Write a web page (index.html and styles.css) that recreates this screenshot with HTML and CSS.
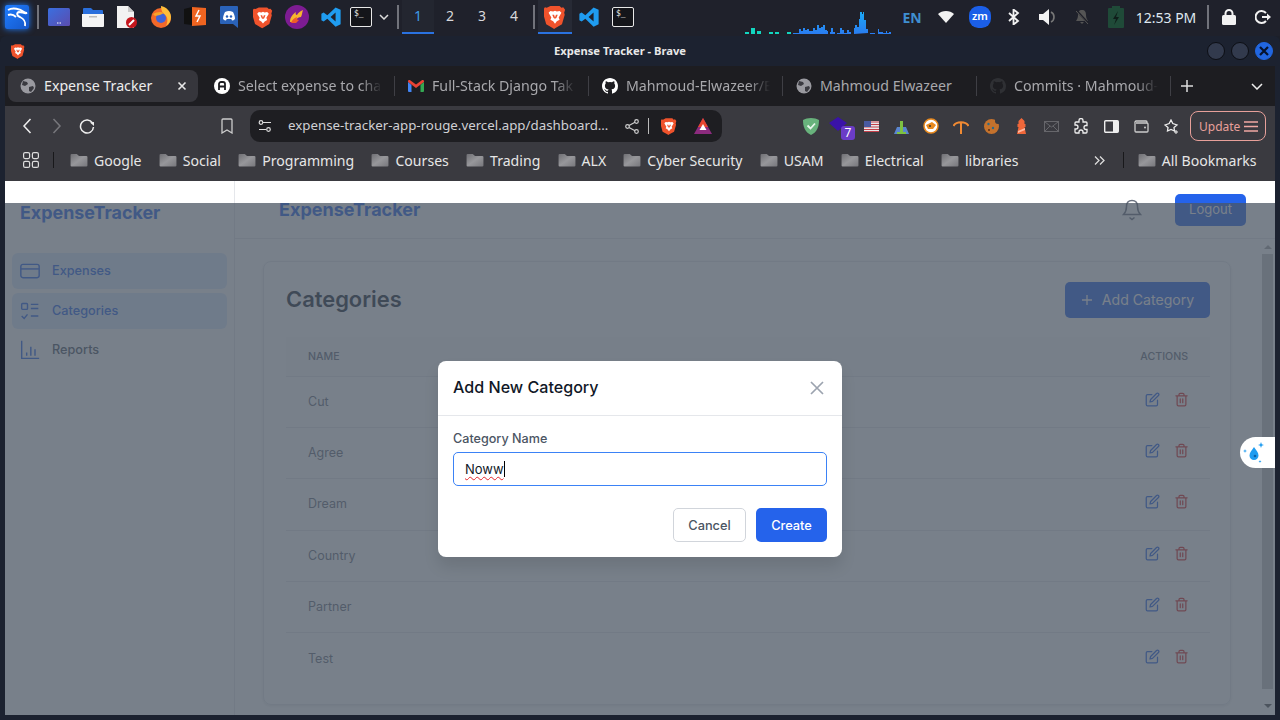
FILE: index.html
```html
<!DOCTYPE html>
<html lang="en">
<head>
  <meta charset="UTF-8">
  <meta name="viewport" content="width=device-width, initial-scale=1.0">
  <title>Expense Tracker - Brave</title>
  <link rel="stylesheet" href="styles.css">
</head>
<body>
  <svg class="icon-defs" width="0" height="0">
    <defs>
      <symbol id="brave" viewBox="0 0 24 24">
        <path fill="#f0532c" d="M7 1h10l2 2 2-.5 2 2.500-1 3.500.6 2-3 10.500-7 4-1.600 1-1.600-1-7-4-3-10.500.6-2-1-3.500 2-2.500 2 .5z" transform="translate(0 -.5)"/>
        <path fill="#fff" d="M7 6l3 .5 2-.8 2 .8 3-.5 2 2-3 5 1 2.500-3 1.800-2 2.500-2-2.500-3-1.800 1-2.500-3-5z"/>
        <path fill="#f0532c" d="M9 10h2l1 3 1-3h2l-1.500 3.500-1.500 1-1.500-1z"/>
      </symbol>
      <symbol id="vscode" viewBox="0 0 24 24">
        <path fill="#1f9cf0" fill-rule="evenodd" d="M17 1.500l5.500 2.600v15.800L17 22.500 8 13.800l-4 3-2.500-1.200V8.400L4 7.200l4 3zM17 7l-5.500 5 5.500 5z"/>
      </symbol>
      <symbol id="globe" viewBox="0 0 16 16">
        <circle cx="8" cy="8" r="7.500" fill="#9a9aa0"/>
        <path fill="#3a3a40" d="M3 3l4 1 1 2-3 2-3-1zM9 9l4-1 1 2-3 4-2-1z"/>
      </symbol>
      <symbol id="github" viewBox="0 0 16 16">
        <path fill="currentColor" d="M8 0C3.580 0 0 3.580 0 8c0 3.540 2.290 6.530 5.470 7.590.4.070.55-.17.55-.38v-1.340c-2.230.48-2.690-1.070-2.690-1.070-.36-.93-.89-1.170-.89-1.170-.73-.5.050-.49.050-.49.800.060 1.220.820 1.220.820.710 1.220 1.870.870 2.330.660.070-.520.280-.870.510-1.070-1.780-.2-3.640-.89-3.640-3.950 0-.870.310-1.590.820-2.150-.080-.2-.360-1.020.080-2.120 0 0 .670-.210 2.200.820a7.600 7.600 0 0 1 4 0c1.530-1.040 2.200-.820 2.200-.820.440 1.100.160 1.920.080 2.120.510.560.820 1.270.820 2.150 0 3.070-1.870 3.750-3.650 3.950.290.250.540.730.540 1.480v2.200c0 .210.150.460.550.380A8 8 0 0 0 16 8c0-4.420-3.580-8-8-8z"/>
      </symbol>
      <symbol id="folder" viewBox="0 0 16 14" preserveAspectRatio="none">
        <path fill="url(#folder-fill)" d="M1 1h5l2 2h6.500a1 1 0 0 1 1 1v8.500a1 1 0 0 1-1 1h-13a1 1 0 0 1-1-1V2a1 1 0 0 1 1-1z"/>
      </symbol>
      <linearGradient id="folder-fill" x1="0" y1="0" x2="1" y2="1">
        <stop offset="0" stop-color="#6f6f74"/>
        <stop offset=".5" stop-color="#97979b"/>
        <stop offset="1" stop-color="#77777c"/>
      </linearGradient>
      <symbol id="edit" viewBox="0 0 24 24">
        <path fill="none" stroke="currentColor" stroke-width="2" stroke-linecap="round" stroke-linejoin="round" d="M11 4H4a2 2 0 0 0-2 2v14a2 2 0 0 0 2 2h14a2 2 0 0 0 2-2v-7M18.500 2.500a2.121 2.121 0 0 1 3 3L12 15l-4 1 1-4 9.500-9.500z"/>
      </symbol>
      <symbol id="trash" viewBox="0 0 24 24">
        <path fill="none" stroke="currentColor" stroke-width="2" stroke-linecap="round" stroke-linejoin="round" d="M3 6h18M19 6v14a2 2 0 0 1-2 2H7a2 2 0 0 1-2-2V6m3 0V4a2 2 0 0 1 2-2h4a2 2 0 0 1 2 2v2M10 11v6M14 11v6"/>
      </symbol>
    </defs>
  </svg>

  <!-- desktop panel -->
  <div class="panel">
    <div class="panel-app">
      <div class="kali">
        <svg width="24" height="24" viewBox="0 0 24 24"><path fill="none" stroke="#fff" stroke-width="1.900" d="M3 5c5-3 12-1 16 2 1 1 2 1 3 1-2 1-5-1-8-1-3 1-2 4 1 5 4 2 6 4 5 9M3 10c3-1 6 0 8 2"/></svg>
      </div>
    </div>
    <div class="panel-sep"></div>
    <div class="panel-app">
      <svg width="22" height="18" viewBox="0 0 22 18"><defs><linearGradient id="desk" x1="0" y1="0" x2="1" y2="1"><stop offset="0" stop-color="#3a6fe0"/><stop offset="1" stop-color="#5b4cae"/></linearGradient></defs><rect width="22" height="18" rx="1.500" fill="url(#desk)"/><path stroke="#fff" stroke-dasharray="1.500 1" d="M9 15h5"/></svg>
    </div>
    <div class="panel-app">
      <svg width="22" height="20" viewBox="0 0 22 20"><path fill="#2a6fdc" d="M1 2a1 1 0 0 1 1-1h7l2 2h9a1 1 0 0 1 1 1v4H1z"/><path fill="#f4f4f4" d="M0 7h22v12a1 1 0 0 1-1 1H1a1 1 0 0 1-1-1z"/><rect x="7" y="9" width="8" height="1.500" fill="#bbb"/></svg>
    </div>
    <div class="panel-app">
      <svg width="22" height="22" viewBox="0 0 22 22"><path fill="#f2f2f2" d="M1 0h11l6 6v16H1z"/><path fill="#c9c9c9" d="M12 0l6 6h-6z"/><circle cx="15.500" cy="16.500" r="5.500" fill="#c5161d"/><path stroke="#fff" stroke-width="2" d="M13 19l5-5"/></svg>
    </div>
    <div class="panel-app">
      <svg width="22" height="22" viewBox="0 0 22 22"><circle cx="11" cy="12" r="10" fill="#f2682a"/><path fill="#ffbd39" d="M11 0c5 1 10 5 10 11 0 4-2 7-5 9 2-4 2-9-1-11-2-2-4-4-4-9z"/><circle cx="11" cy="12" r="5" fill="#3f63d8"/><path fill="#f7a32a" d="M3 8c3-2 8-3 11-1l-4 2-5 1z"/></svg>
    </div>
    <div class="panel-app">
      <svg width="22" height="22" viewBox="0 0 22 22"><path fill="#111" d="M0 3l8-2v18l-8-1z"/><path fill="#ef6420" d="M8 1l14 1v17l-14 1z"/><path fill="none" stroke="#fff" stroke-width="1.500" d="M15 4l-3 6h4l-3 6"/></svg>
    </div>
    <div class="panel-app">
      <svg width="18" height="22" viewBox="0 0 18 22"><path fill="#2a62b8" d="M1 0h16a1 1 0 0 1 1 1v21l-5-4H1a1 1 0 0 1-1-1V1a1 1 0 0 1 1-1z"/><path fill="#fff" d="M5 6c3-1.500 5-1.500 8 0 1 2 2 4 2 7-1 1-2 1.500-3 1.500l-.7-1.500h-4.600L6 14.500C5 14.500 4 14 3 13c0-3 1-5 2-7z"/><circle cx="7" cy="10.500" r="1.200" fill="#2a62b8"/><circle cx="11" cy="10.500" r="1.200" fill="#2a62b8"/></svg>
    </div>
    <div class="panel-app"><svg width="20" height="24"><use href="#brave"/></svg></div>
    <div class="panel-app">
      <svg width="24" height="24" viewBox="0 0 24 24"><circle cx="12" cy="12" r="12" fill="#7d1c92"/><path fill="#f6b52e" d="M5 17c0-5 3-8 6-10-1 2 0 3 1 3 1-2 3-4 6-5-1 3-1 5-2 7-2 0-4 1-5 3l-2 2z"/><path fill="#ef5b2b" d="M6 18c1-3 3-5 6-6-1 2 0 3 2 3l-3 3z"/></svg>
    </div>
    <div class="panel-app"><svg width="22" height="22"><use href="#vscode"/></svg></div>
    <div class="panel-app term-cell"><div class="term-box">$_</div></div>
    <div class="panel-app drop-cell">
      <svg width="10" height="6" viewBox="0 0 10 6"><path fill="none" stroke="#ddd" stroke-width="1.500" d="M1 1l4 4 4-4"/></svg>
    </div>
    <div class="panel-sep"></div>
    <div class="workspace is-current">1</div>
    <div class="workspace">2</div>
    <div class="workspace">3</div>
    <div class="workspace">4</div>
    <div class="panel-sep"></div>
    <div class="panel-app is-running"><svg width="22" height="25"><use href="#brave"/></svg></div>
    <div class="panel-app"><svg width="22" height="22"><use href="#vscode"/></svg></div>
    <div class="panel-app term-cell-wide"><div class="term-box">$_</div></div>

    <svg class="net-graph" width="148" height="30" viewBox="0 0 148 30">
      <defs><linearGradient id="net" x1="0" y1="0" x2="0" y2="1"><stop offset="0" stop-color="#1aa8f5"/><stop offset="1" stop-color="#2a7cf0"/></linearGradient></defs>
      <path fill="#12d6c0" d="M0 28h4v2H0zM6 24h4v6H6zM12 27h4v3h-4zM24 28h4v2h-4zM30 28h4v2h-4zM42 28h4v2h-4z"/>
      <path fill="url(#net)" d="M48 30v-1h6v-4h2v2h2v-3h2v2h2v-1h2v2h4v-3h2v2h2v-5h2v3h2v-1h2v-2h2v5h2v1h-5v0h6v3zM85 30v-2h1v-4h2v4h2v2zM92 30v-1h3v-5h2v2h2v3h3v-3h2v2h2v2zM109 30v-6h1v-3h2v2h2v-8h1v-7h2v2h1v-2h1v8h2v9h2v4zM125 30v-1h5v1zM133 30v-5h1v3h4v1h3v-2h1v2h2v-1h2v2z"/>
    </svg>

    <div class="tray-cell tray-lang">EN</div>
    <div class="tray-cell">
      <svg width="16" height="12" viewBox="0 0 16 12"><path fill="#f2f2f2" d="M0 3c4-4 12-4 16 0l-8 9z"/></svg>
    </div>
    <div class="tray-cell"><div class="zoom-badge">zm</div></div>
    <div class="tray-cell">
      <svg width="12" height="16" viewBox="0 0 12 16"><path fill="none" stroke="#f2f2f2" stroke-width="1.800" d="M1 4l9 8-4.500 3.500V.5L10 4l-9 8"/></svg>
    </div>
    <div class="tray-cell">
      <svg width="18" height="16" viewBox="0 0 18 16"><path fill="#f2f2f2" d="M0 5h4l6-5v16l-6-5H0z"/><path fill="none" stroke="#777" stroke-width="1.600" d="M12 3c4 2 4 8 0 10"/></svg>
    </div>
    <div class="tray-cell">
      <svg width="16" height="16" viewBox="0 0 16 16"><path fill="#555" d="M8 1c3 0 4 2 4 5 0 3 1 4 2 6H2c1-2 2-3 2-6 0-3 1-5 4-5zM6 13h4l-2 2z"/><path stroke="#1f2029" stroke-width="2" d="M2 1l12 13"/><path stroke="#555" d="M2 2l12 13"/></svg>
    </div>
    <div class="tray-cell">
      <svg width="16" height="22" viewBox="0 0 16 22"><rect x="4" width="8" height="2" fill="#1f4a38"/><rect y="2" width="16" height="20" rx="1" fill="#1f4a38"/><path fill="#0f1d1a" d="M10 5l-5 8h3l-2 6 5-8H8z"/></svg>
    </div>
    <div class="tray-time">12:53 PM</div>
    <div class="panel-sep tray-sep"></div>
    <div class="panel-app">
      <svg width="14" height="16" viewBox="0 0 14 16"><path fill="none" stroke="#f2f2f2" stroke-width="2" d="M3.500 7V4.500a3.500 3.500 0 0 1 7 0V7"/><rect y="6" width="14" height="10" rx="1.500" fill="#f2f2f2"/></svg>
    </div>
    <div class="panel-app">
      <svg width="16" height="14" viewBox="0 0 16 14"><path fill="none" stroke="#f2f2f2" stroke-width="2" d="M11 3a6 6 0 1 0 0 8"/><path fill="#f2f2f2" d="M7 6h5V3.500L16 7l-4 3.500V8H7z"/></svg>
    </div>
  </div>

  <div class="window">
    <div class="titlebar">
      <svg class="title-logo" width="14" height="16"><use href="#brave"/></svg>
      <div class="title-text">Expense Tracker - Brave</div>
      <div class="title-buttons">
        <span class="win-btn"></span>
        <span class="win-btn"></span>
        <span class="win-btn win-close">
          <svg width="10" height="10" viewBox="0 0 10 10"><path stroke="#06122c" stroke-width="2.200" d="M1 1l8 8M9 1l-8 8"/></svg>
        </span>
      </div>
    </div>

    <div class="tabstrip">
      <div class="tab is-active">
        <svg class="fav" width="16" height="16"><use href="#globe"/></svg>
        <span class="tab-title">Expense Tracker</span>
        <svg class="tab-close" width="10" height="10" viewBox="0 0 10 10"><path stroke="#e8e8e8" stroke-width="1.600" d="M1.500 1.500l7 7M8.500 1.500l-7 7"/></svg>
      </div>
      <span class="tab-sep is-hidden"></span>
      <div class="tab">
        <svg class="fav" width="16" height="16" viewBox="0 0 16 16"><circle cx="8" cy="8" r="8" fill="#fff"/><path fill="none" stroke="#1d1d21" stroke-width="1.800" d="M5 12V6a2 2 0 0 1 2-2h2a2 2 0 0 1 2 2v6M5 8.500h6"/></svg>
        <span class="tab-title">Select expense to char</span>
      </div>
      <span class="tab-sep"></span>
      <div class="tab">
        <svg class="fav" width="16" height="12" viewBox="0 0 16 12"><path fill="#ea4335" d="M0 2l8 6 8-6v-.5C16 0 14.500-.3 13.500.4L8 4.500 2.500.4C1.500-.3 0 0 0 1.500z"/><path fill="#4285f4" d="M0 2v9a1 1 0 0 0 1 1h2.500V5z"/><path fill="#34a853" d="M16 2v9a1 1 0 0 1-1 1h-2.500V5z"/></svg>
        <span class="tab-title">Full-Stack Django Tak</span>
      </div>
      <span class="tab-sep"></span>
      <div class="tab">
        <svg class="fav fav-github" width="16" height="16"><use href="#github"/></svg>
        <span class="tab-title">Mahmoud-Elwazeer/E</span>
      </div>
      <span class="tab-sep"></span>
      <div class="tab">
        <svg class="fav" width="16" height="16"><use href="#globe"/></svg>
        <span class="tab-title tab-title-plain">Mahmoud Elwazeer</span>
      </div>
      <span class="tab-sep"></span>
      <div class="tab">
        <svg class="fav fav-github-dim" width="16" height="16"><use href="#github"/></svg>
        <span class="tab-title">Commits · Mahmoud-</span>
      </div>
      <span class="tab-sep"></span>
      <svg class="tab-plus" width="12" height="12" viewBox="0 0 12 12"><path stroke="#ddd" stroke-width="1.500" d="M6 0v12M0 6h12"/></svg>
      <svg class="tab-list" width="12" height="7" viewBox="0 0 12 7"><path fill="none" stroke="#eee" stroke-width="1.500" d="M1 1l5 5 5-5"/></svg>
    </div>

    <div class="toolbar">
      <div class="tool-btn">
        <svg width="10" height="16" viewBox="0 0 10 16"><path fill="none" stroke="#eee" stroke-width="1.500" d="M8.500 1L2 8l6.500 7"/></svg>
      </div>
      <div class="tool-btn">
        <svg width="10" height="16" viewBox="0 0 10 16"><path fill="none" stroke="#77777c" stroke-width="1.500" d="M1.500 1L8 8l-6.500 7"/></svg>
      </div>
      <div class="tool-btn">
        <svg width="16" height="16" viewBox="0 0 16 16"><path fill="none" stroke="#eee" stroke-width="1.500" d="M13.500 5A6.500 6.500 0 1 0 14.500 9"/><path fill="#eee" d="M11 4.500l4-.5v4z"/></svg>
      </div>
      <div class="tool-btn tool-bookmark">
        <svg width="12" height="16" viewBox="0 0 12 16"><path fill="none" stroke="#ccc" stroke-width="1.300" d="M1 2a1 1 0 0 1 1-1h8a1 1 0 0 1 1 1v13l-5-3-5 3z"/></svg>
      </div>
      <div class="urlbar">
        <svg class="url-tune" width="14" height="14" viewBox="0 0 14 14"><g fill="none" stroke="#ddd" stroke-width="1.200"><circle cx="3" cy="3.500" r="1.800"/><path d="M5 3.500h8M1 10.500h7"/><circle cx="10.500" cy="10.500" r="1.800"/></g></svg>
        <span class="url-text">expense-tracker-app-rouge.vercel.app/dashboard…</span>
        <svg class="url-share" width="14" height="15" viewBox="0 0 14 15"><g fill="none" stroke="#ccc" stroke-width="1.200"><circle cx="2.500" cy="7.500" r="1.800"/><circle cx="11.500" cy="2.500" r="1.800"/><circle cx="11.500" cy="12.500" r="1.800"/><path d="M4 6.500l6-3.300M4 8.500l6 3.300"/></g></svg>
        <span class="url-sep"></span>
        <svg class="url-brave" width="16" height="18"><use href="#brave"/></svg>
        <svg class="url-rewards" width="18" height="16" viewBox="0 0 18 16"><path fill="#8c2b7e" d="M9 0l9 16H0z"/><path fill="#e6452f" d="M9 0l5 9H4z"/><path fill="#fff" d="M9 6l3.500 6h-7z"/></svg>
      </div>
      <div class="extensions">
        <div class="ext">
          <svg width="16" height="17" viewBox="0 0 16 17"><path fill="#68b27c" d="M8 0c3 0 6 .8 8 2 0 7-2 12-8 15C2 14 0 9 0 2c2-1.200 5-2 8-2z"/><path fill="none" stroke="#e8f5ec" stroke-width="1.800" d="M4.500 7.500l3 3 4.500-5"/></svg>
        </div>
        <div class="ext ext-badge-wrap">
          <svg class="ext-diamond" width="18" height="14" viewBox="0 0 18 14"><path fill="#3a13a8" d="M9 0l9 6-9 8-9-8z"/></svg>
          <span class="ext-badge">7</span>
        </div>
        <div class="ext">
          <svg width="15" height="11" viewBox="0 0 15 11"><rect width="15" height="11" fill="#e8e8ea"/><path stroke="#c5404a" stroke-width="1.200" d="M0 1h15M0 3.500h15M0 6h15M0 8.500h15M0 10.500h15"/><rect width="7" height="6" fill="#4a5aa0"/></svg>
        </div>
        <div class="ext">
          <svg width="15" height="15" viewBox="0 0 15 15"><path fill="#5a86d0" d="M0 15l3-7h3v7zM9 8h3l3 7H9z"/><path fill="#7dc142" d="M6 15V2h3v13zM3 13h9v2H3z"/></svg>
        </div>
        <div class="ext">
          <svg width="16" height="16" viewBox="0 0 16 16"><circle cx="8" cy="8" r="7" fill="#fff" stroke="#e98a1e" stroke-width="1.500"/><path fill="#e98a1e" d="M3 7l6-3 4 3-3 4H5z"/><circle cx="7" cy="8" r="1" fill="#333"/></svg>
        </div>
        <div class="ext">
          <svg width="16" height="16" viewBox="0 0 16 16"><path fill="none" stroke="#f08a33" stroke-width="2" d="M8 4v12M.5 8C3 3 13 3 15.500 8"/></svg>
        </div>
        <div class="ext">
          <svg width="15" height="15" viewBox="0 0 15 15"><circle cx="7.500" cy="7.500" r="7.500" fill="#c4722d"/><circle cx="4.500" cy="5" r="1.200" fill="#2b6a8a"/><circle cx="9" cy="9" r="1.200" fill="#2b6a8a"/><circle cx="5" cy="11" r="1" fill="#5a3015"/><circle cx="14" cy="2" r="3" fill="#3a3a40"/></svg>
        </div>
        <div class="ext">
          <svg width="15" height="16" viewBox="0 0 13 16"><path fill="#f0673a" d="M6.500 0l3 3v3h1v3h-1l1.500 7H2L3.500 9h-1V6h1V3z"/><path fill="#ffb8a0" d="M3 13l7-3v2l-7 3z"/></svg>
        </div>
        <div class="ext">
          <svg width="15" height="11" viewBox="0 0 15 11"><rect x=".5" y=".5" width="14" height="10" fill="none" stroke="#66666b"/><path fill="none" stroke="#66666b" d="M1 1l6.500 5L14 1M1 10l5-5M14 10L9 5"/></svg>
        </div>
        <div class="ext">
          <svg width="16" height="16" viewBox="0 0 16 16"><path fill="none" stroke="#eee" stroke-width="1.300" d="M6 2.500a2 2 0 0 1 4 0V4h3a1 1 0 0 1 1 1v2.500h-1a2 2 0 0 0 0 4h1V14a1 1 0 0 1-1 1h-3v-1a2 2 0 0 0-4 0v1H3a1 1 0 0 1-1-1v-3h1a2 2 0 0 0 0-4H2V5a1 1 0 0 1 1-1h3z"/></svg>
        </div>
        <div class="ext">
          <svg width="15" height="13" viewBox="0 0 15 13"><rect x=".7" y=".7" width="13.600" height="11.600" rx="1" fill="none" stroke="#eee" stroke-width="1.400"/><rect x="9" y="1" width="5" height="11" fill="#eee"/></svg>
        </div>
        <div class="ext">
          <svg width="15" height="13" viewBox="0 0 15 13"><path fill="none" stroke="#ccc" stroke-width="1.300" d="M13 3V2a1 1 0 0 0-1-1H2a1.500 1.500 0 0 0-1 2v8a1 1 0 0 0 1 1h11a1 1 0 0 0 1-1V4a1 1 0 0 0-1-1H2"/><circle cx="11" cy="7.500" r="1" fill="#ccc"/></svg>
        </div>
        <div class="ext">
          <svg width="15" height="15" viewBox="0 0 15 15"><path fill="none" stroke="#eee" stroke-width="1.300" d="M7 1l1.800 3.500L13 6l-3 2.500.5 3.500-3.500-1.500L3.500 12 4 8.500 1 6l4.200-1.500z"/><path stroke="#eee" d="M12 11v4M10 13h4"/></svg>
        </div>
      </div>
      <div class="update-btn">
        <span>Update</span>
        <svg width="14" height="11" viewBox="0 0 14 11"><path stroke="#f1a8a2" stroke-width="1.300" d="M0 1h14M0 5.500h14M0 10h14"/></svg>
      </div>
    </div>

    <div class="bookmarks">
      <svg class="apps-icon" width="16" height="16" viewBox="0 0 16 16"><g fill="none" stroke="#ddd" stroke-width="1.200"><rect x=".6" y=".6" width="6" height="6" rx="1.500"/><rect x="9.400" y=".6" width="6" height="6" rx="1.500"/><rect x=".6" y="9.400" width="6" height="6" rx="1.500"/><rect x="9.400" y="9.400" width="6" height="6" rx="1.500"/></g></svg>
      <span class="bm-sep"></span>
      <div class="bm"><svg width="18" height="14"><use href="#folder"/></svg>Google</div>
      <div class="bm"><svg width="18" height="14"><use href="#folder"/></svg>Social</div>
      <div class="bm"><svg width="18" height="14"><use href="#folder"/></svg>Programming</div>
      <div class="bm"><svg width="18" height="14"><use href="#folder"/></svg>Courses</div>
      <div class="bm"><svg width="18" height="14"><use href="#folder"/></svg>Trading</div>
      <div class="bm"><svg width="18" height="14"><use href="#folder"/></svg>ALX</div>
      <div class="bm"><svg width="18" height="14"><use href="#folder"/></svg>Cyber Security</div>
      <div class="bm"><svg width="18" height="14"><use href="#folder"/></svg>USAM</div>
      <div class="bm"><svg width="18" height="14"><use href="#folder"/></svg>Electrical</div>
      <div class="bm"><svg width="18" height="14"><use href="#folder"/></svg>libraries</div>
      <svg class="bm-more" width="11" height="9" viewBox="0 0 11 9"><path fill="none" stroke="#ddd" stroke-width="1.300" d="M1 .5l4 4-4 4M6 .5l4 4-4 4"/></svg>
      <span class="bm-sep bm-sep-right"></span>
      <div class="bm"><svg width="18" height="14"><use href="#folder"/></svg>All Bookmarks</div>
    </div>

    <!-- page -->
    <div class="page">
      <aside class="sidebar">
        <div class="side-logo">ExpenseTracker</div>
        <nav class="side-nav">
          <a class="side-link is-on">
            <svg width="20" height="20" viewBox="0 0 24 24"><rect x="1" y="4" width="22" height="16" rx="2.500" fill="none" stroke="currentColor" stroke-width="1.700"/><path stroke="currentColor" stroke-width="1.700" d="M1 9.500h22"/></svg>
            <span>Expenses</span>
          </a>
          <a class="side-link is-on">
            <svg width="20" height="20" viewBox="0 0 24 24"><g fill="none" stroke="currentColor" stroke-width="1.700"><rect x="2" y="3" width="7" height="7" rx="1"/><path d="M13 4h9M13 9h9M13 18h9M2 18l3 3 4-5"/></g></svg>
            <span>Categories</span>
          </a>
          <a class="side-link is-report">
            <svg width="20" height="20" viewBox="0 0 24 24"><path fill="none" stroke="#2563eb" stroke-width="1.700" d="M2 1v21h21M8 15v4M13 8v11M18 11v8"/></svg>
            <span>Reports</span>
          </a>
        </nav>
      </aside>

      <div class="main">
        <header class="topbar">
          <div class="top-logo">ExpenseTracker</div>
          <svg class="bell" width="20" height="22" viewBox="0 0 20 22"><path fill="none" stroke="#6b7280" stroke-width="1.500" d="M10 1.500c-3.500 0-5.500 2.500-5.500 6 0 4-1 6-3 8h17c-2-2-3-4-3-8 0-3.500-2-6-5.500-6zM7.500 18.500l2.500 2 2.500-2"/></svg>
          <button class="logout">Logout</button>
        </header>
        <div class="main-body">
          <section class="card">
            <div class="card-head">
              <h1>Categories</h1>
              <button class="add-btn">
                <svg width="12" height="12" viewBox="0 0 12 12"><path stroke="#fff" stroke-width="1.300" d="M6 1v10M1 6h10"/></svg>
                <span>Add Category</span>
              </button>
            </div>
            <table class="cat-table">
              <thead>
                <tr><th>Name</th><th class="col-actions">Actions</th></tr>
              </thead>
              <tbody>
                <tr><td>Cut</td><td class="col-actions"><svg class="act-edit" width="15" height="15"><use href="#edit"/></svg><svg class="act-del" width="15" height="15"><use href="#trash"/></svg></td></tr>
                <tr><td>Agree</td><td class="col-actions"><svg class="act-edit" width="15" height="15"><use href="#edit"/></svg><svg class="act-del" width="15" height="15"><use href="#trash"/></svg></td></tr>
                <tr><td>Dream</td><td class="col-actions"><svg class="act-edit" width="15" height="15"><use href="#edit"/></svg><svg class="act-del" width="15" height="15"><use href="#trash"/></svg></td></tr>
                <tr><td>Country</td><td class="col-actions"><svg class="act-edit" width="15" height="15"><use href="#edit"/></svg><svg class="act-del" width="15" height="15"><use href="#trash"/></svg></td></tr>
                <tr><td>Partner</td><td class="col-actions"><svg class="act-edit" width="15" height="15"><use href="#edit"/></svg><svg class="act-del" width="15" height="15"><use href="#trash"/></svg></td></tr>
                <tr class="last-row"><td>Test</td><td class="col-actions"><svg class="act-edit" width="15" height="15"><use href="#edit"/></svg><svg class="act-del" width="15" height="15"><use href="#trash"/></svg></td></tr>
              </tbody>
            </table>
          </section>
          <div class="scrollbar">
            <span class="arrow-up"></span>
            <span class="scroll-thumb"></span>
            <span class="arrow-down"></span>
          </div>
        </div>
      </div>

      <div class="overlay">
        <div class="modal">
          <div class="modal-head">
            <h2>Add New Category</h2>
            <svg width="14" height="14" viewBox="0 0 14 14"><path stroke="#9ca3af" stroke-width="1.700" d="M1 1l12 12M13 1L1 13"/></svg>
          </div>
          <div class="modal-body">
            <label class="field-label">Category Name</label>
            <div class="field-input"><span class="typed">Noww</span></div>
            <div class="modal-actions">
              <button class="btn-cancel">Cancel</button>
              <button class="btn-create">Create</button>
            </div>
          </div>
        </div>
      </div>

      <div class="float-tab">
        <svg width="24" height="22" viewBox="0 0 24 22"><path fill="#1e9cf0" d="M12 5c2 3 4.500 5.500 4.500 8.500a4.500 4.500 0 0 1-9 0C7.500 10.500 10 8 12 5z"/><circle cx="13" cy="14" r="1.300" fill="#0b5fa8"/><path fill="#1e9cf0" d="M19 0l.8 2.200L22 3l-2.200.8L19 6l-.8-2.200L16 3l2.200-.8zM3 7l.5 1.500L5 9l-1.500.5L3 11l-.5-1.500L1 9l1.500-.5zM18 18l.4 1.100 1.100.4-1.100.4-.4 1.100-.4-1.100-1.100-.4 1.100-.4z"/></svg>
      </div>
    </div>
  </div>
</body>
</html>
```

FILE: styles.css
```css
/* Desktop */
* {
  box-sizing: border-box;
}

html, body {
  margin: 0;
  padding: 0;
  height: 720px;
  overflow: hidden;
}

body {
  display: flex;
  flex-direction: column;
  background-color: #1c1f29;
  font-family: "Noto Sans", sans-serif;
}

.icon-defs {
  position: absolute;
}

svg {
  display: block;
  flex-shrink: 0;
}

.panel {
  display: flex;
  align-items: center;
  height: 36px;
  flex-shrink: 0;
  background-color: #1f212b;
  color: #e6e6e6;
}

.panel-app {
  display: flex;
  align-items: center;
  justify-content: center;
  width: 34px;
  height: 34px;
  margin-bottom: 2px;
}

.kali {
  display: flex;
  align-items: center;
  justify-content: center;
  width: 24px;
  height: 24px;
  background: linear-gradient(135deg, #1f7dff, #1557c9);
  border-radius: 2px;
  box-shadow: 0 0 6px #1f7dff;
}

.panel-sep {
  width: 2px;
  height: 24px;
  margin: 0 3px 2px;
  background-color: #71737b;
}

.term-cell {
  width: 26px;
}

.drop-cell {
  width: 20px;
}

.term-cell-wide {
  width: 34px;
}

.term-box {
  width: 22px;
  height: 20px;
  padding-left: 3px;
  background-color: #14151a;
  border: 1px solid #e8e8e8;
  border-radius: 2px;
  font-family: "DejaVu Sans Mono", monospace;
  font-size: 8px;
  line-height: 12px;
  color: #eee;
}

.workspace {
  width: 32px;
  height: 34px;
  margin-bottom: 2px;
  text-align: center;
  font-size: 14px;
  line-height: 32px;
  color: #d8d8dc;
}

.workspace.is-current {
  background-color: #232630;
  border-bottom: 2px solid #2a72e0;
  color: #3f9be8;
}

.is-running {
  background-color: #272a35;
  border-bottom: 2px solid #2a72e0;
}

.net-graph {
  align-self: flex-start;
  margin: 4px 0 0 105px;
}

.tray-cell {
  display: flex;
  align-items: center;
  justify-content: center;
  width: 34px;
  height: 34px;
  margin-bottom: 2px;
}

.net-graph + .tray-cell {
  margin-left: 2px;
}

.tray-lang {
  font-size: 14px;
  font-weight: 700;
  color: #3f8fd0;
}

.zoom-badge {
  width: 22px;
  height: 22px;
  background-color: #1b5fe8;
  border-radius: 42%;
  text-align: center;
  font-size: 11px;
  font-weight: 600;
  line-height: 20px;
  color: #fff;
}

.tray-time {
  width: 66px;
  margin-bottom: 2px;
  text-align: center;
  white-space: nowrap;
  font-size: 14px;
  color: #dfe8f0;
}

.tray-sep {
  margin-left: 8px;
}

/* Browser window */
.window {
  flex: 1;
  min-height: 0;
  display: flex;
  flex-direction: column;
  padding: 0 5px 5px;
  background-color: #1c2230;
  border-radius: 6px 6px 0 0;
}

.titlebar {
  position: relative;
  display: flex;
  align-items: center;
  justify-content: center;
  flex-shrink: 0;
  height: 30px;
  padding: 0 40px 2px 0;
}

.title-logo {
  position: absolute;
  left: 6px;
  top: 7px;
}

.title-text {
  font-size: 11.200px;
  font-weight: 700;
  color: #e8e8e8;
}

.title-buttons {
  position: absolute;
  right: 2px;
  top: 6px;
  display: flex;
  gap: 6px;
}

.win-btn {
  display: flex;
  align-items: center;
  justify-content: center;
  width: 18px;
  height: 18px;
  background-color: #323a4d;
  border: 1px solid #0c0e14;
  border-radius: 50%;
}

.win-close {
  background-color: #2166e0;
  border-color: #2166e0;
}

.tabstrip {
  display: flex;
  align-items: center;
  flex-shrink: 0;
  height: 40px;
  padding-left: 3px;
  background-color: #1d1d21;
}

.tab {
  display: flex;
  align-items: center;
  gap: 8px;
  width: 190px;
  height: 32px;
  padding: 0 0 2px 12px;
  font-size: 14.200px;
  color: #a8a8ac;
}

.tab > svg {
  margin-top: 2px;
}

.tab.is-active {
  background-color: #36363c;
  border-radius: 8px;
  color: #ececec;
}

.tab-title {
  flex: none;
  width: 144px;
  white-space: nowrap;
  -webkit-mask-image: linear-gradient(to right, #000 85%, transparent 100%);
  mask-image: linear-gradient(to right, #000 85%, transparent 100%);
}

.tab.is-active .tab-title {
  flex: 1;
  width: auto;
}

.tab.is-active .tab-title,
.tab-title-plain {
  -webkit-mask-image: none;
  mask-image: none;
}

.tab-close {
  margin-right: 11px;
}

.tab-sep {
  width: 1px;
  height: 20px;
  margin: 0 1.500px;
  background-color: #3f3f45;
}

.tab-sep.is-hidden {
  background-color: transparent;
}

.fav-github {
  color: #fff;
}

.fav-github-dim {
  color: #2f3034;
}

.tab-plus {
  margin-left: 9px;
}

.tab-list {
  margin-left: 58px;
}

.toolbar {
  display: flex;
  align-items: center;
  flex-shrink: 0;
  height: 40px;
  padding-left: 7px;
  background-color: #3a3a40;
}

.tool-btn {
  display: flex;
  align-items: center;
  justify-content: center;
  width: 30px;
  height: 30px;
}

.tool-bookmark {
  margin-left: 110px;
}

.urlbar {
  display: flex;
  align-items: center;
  width: 472px;
  height: 32px;
  margin-left: 8px;
  padding-left: 8px;
  background-color: #1e1e22;
  border-radius: 10px;
}

.url-text {
  width: 322px;
  margin: 0 0 2px 16px;
  white-space: nowrap;
  font-size: 13.300px;
  color: #d0d0d4;
}

.url-share {
  margin-left: 15px;
}

.url-sep {
  width: 1px;
  height: 16px;
  margin-left: 9px;
  background-color: #bbb;
}

.url-brave {
  margin-left: 12px;
}

.url-rewards {
  margin-left: 17px;
}

.extensions {
  display: flex;
  margin-left: 74px;
}

.ext {
  position: relative;
  display: flex;
  align-items: center;
  justify-content: center;
  width: 30px;
  height: 30px;
}

.ext-diamond {
  margin: 0 6px 4px 0;
}

.ext-badge {
  position: absolute;
  left: 15px;
  top: 15px;
  width: 14px;
  height: 14px;
  background-color: #6b3cc7;
  border-radius: 3px;
  text-align: center;
  font-size: 12px;
  line-height: 14px;
  color: #fff;
}

.update-btn {
  display: flex;
  align-items: center;
  gap: 4px;
  width: 76px;
  height: 30px;
  margin-left: 4px;
  padding-left: 8px;
  border: 1px solid #e8a09a;
  border-radius: 8px;
  font-size: 12px;
  color: #e8a09a;
}

.bookmarks {
  display: flex;
  align-items: center;
  flex-shrink: 0;
  height: 35px;
  padding: 0 0 7px 18px;
  background-color: #3a3a40;
  font-size: 14.100px;
  color: #e6e6e6;
}

.apps-icon {
  margin-right: 6px;
}

.bm-sep {
  width: 1px;
  height: 16px;
  margin: 0 16px 0 8px;
  background-color: #18181b;
}

.bm {
  display: flex;
  align-items: center;
  gap: 6px;
  margin-right: 17.200px;
  white-space: nowrap;
}

.bm-more {
  margin-left: 58px;
}

.bm-sep-right {
  margin-left: 18px;
  margin-right: 14px;
}

/* Expense tracker page */
.page {
  position: relative;
  flex: 1;
  min-height: 0;
  display: flex;
  overflow: hidden;
  background-color: #fff;
  font-family: Inter, sans-serif;
}

.sidebar {
  width: 230px;
  padding: 20px 7px 0;
  border-right: 1px solid #e5e7eb;
}

.side-logo {
  padding: 1px 0 0 8px;
  font-size: 17.900px;
  font-weight: 700;
  line-height: 22px;
  color: #2563eb;
}

.side-nav {
  display: flex;
  flex-direction: column;
  gap: 4px;
  margin-top: 29px;
}

.side-link {
  display: flex;
  align-items: center;
  gap: 12px;
  height: 36px;
  padding-left: 8px;
  border-radius: 6px;
  font-size: 12.700px;
  font-weight: 500;
  color: #4b5563;
}

.side-link span {
  margin-bottom: 1px;
}

.side-link.is-on {
  background-color: #dbeafe;
  color: #2563eb;
}

.side-link.is-report {
  margin-top: -1px;
}

.main {
  flex: 1;
  min-height: 0;
  display: flex;
  flex-direction: column;
}

.topbar {
  display: flex;
  align-items: center;
  flex-shrink: 0;
  height: 58px;
  padding: 0 29px 0 44px;
  border-bottom: 1px solid #e5e7eb;
}

.top-logo {
  flex: 1;
  font-size: 18px;
  font-weight: 700;
  color: #2563eb;
}

.bell {
  margin-right: 33px;
}

.logout {
  width: 71px;
  height: 32px;
  padding-bottom: 2px;
  background-color: #2563eb;
  border: none;
  border-radius: 5px;
  font-family: Inter, sans-serif;
  font-size: 13px;
  color: #fff;
}

.main-body {
  flex: 1;
  min-height: 0;
  display: flex;
  padding: 22px 0 10px 28px;
}

.card {
  width: 968px;
  padding: 20px 20px 0 22px;
  border: 1px solid #e5e7eb;
  border-radius: 8px;
  box-shadow: 0 1px 3px rgba(0, 0, 0, 0.1);
}

.card-head {
  display: flex;
  align-items: center;
  justify-content: space-between;
  height: 36px;
  margin-bottom: 19px;
}

h1 {
  margin: 0 0 2px;
  font-size: 21.900px;
  font-weight: 600;
  color: #1f2937;
}

.add-btn {
  display: flex;
  align-items: center;
  justify-content: center;
  gap: 9px;
  width: 145px;
  height: 36px;
  background-color: #2563eb;
  border: none;
  border-radius: 5px;
  font-family: Inter, sans-serif;
  font-size: 14.100px;
  color: #fff;
}

.add-btn span {
  margin-bottom: 1px;
}

.cat-table {
  width: 100%;
  border-collapse: collapse;
}

.cat-table th {
  height: 39px;
  padding: 0 22px;
  background-color: #f9fafb;
  border-bottom: 1px solid #e5e7eb;
  text-align: left;
  text-transform: uppercase;
  font-size: 10.600px;
  font-weight: 500;
  color: #6b7280;
}

.cat-table td {
  height: 51.400px;
  padding: 0 22px 1px;
  border-bottom: 1px solid #e5e7eb;
  font-size: 12.500px;
  color: #6b7280;
}

.cat-table .last-row td {
  border-bottom: none;
}

.cat-table .col-actions {
  width: 140px;
  text-align: right;
}

.cat-table td.col-actions {
  padding-right: 21px;
  padding-bottom: 2px;
}

.act-edit,
.act-del {
  display: inline-block;
}

.act-edit {
  color: #2563eb;
}

.act-del {
  margin-left: 14px;
  color: #dc2626;
}

.scrollbar {
  display: flex;
  flex-direction: column;
  align-items: center;
  width: 11px;
  height: 475px;
  margin: -21px 2px 0 31px;
}

.arrow-up,
.arrow-down {
  flex-shrink: 0;
  width: 0;
  height: 0;
  border-left: 4px solid transparent;
  border-right: 4px solid transparent;
}

.arrow-up {
  margin-top: 5px;
  border-bottom: 4px solid #a3a3a3;
}

.arrow-down {
  margin-top: 15px;
  border-top: 4px solid #505050;
}

.scroll-thumb {
  flex-shrink: 0;
  width: 100%;
  height: 435px;
  margin-top: 5px;
  background-color: #c1c1c1;
}

/* Modal over the page */
.overlay {
  position: absolute;
  left: 0;
  right: 0;
  top: 22px;
  bottom: 0;
  display: flex;
  align-items: center;
  justify-content: center;
  background-color: rgba(75, 85, 99, 0.75);
}

.modal {
  width: 404px;
  height: 196px;
  background-color: #fff;
  border-radius: 8px;
  box-shadow: 0 10px 15px rgba(0, 0, 0, 0.1);
}

.modal-head {
  display: flex;
  align-items: center;
  justify-content: space-between;
  height: 55px;
  padding: 0 18px 0 15px;
  border-bottom: 1px solid #e5e7eb;
}

h2 {
  margin: 0 0 2px;
  font-size: 16.100px;
  font-weight: 500;
  color: #111827;
}

.modal-body {
  padding: 15px;
}

.field-label {
  display: block;
  font-size: 12.600px;
  font-weight: 500;
  line-height: 16px;
  color: #4b5563;
}

.field-input {
  display: flex;
  align-items: center;
  height: 34px;
  margin-top: 5px;
  padding-left: 11px;
  border: 1px solid #3b82f6;
  border-radius: 5px;
  font-size: 13px;
  color: #111827;
}

.typed {
  border-right: 1px solid #000;
  text-decoration: underline wavy #e5262a 1px;
  text-underline-offset: 2px;
}

.modal-actions {
  display: flex;
  justify-content: flex-end;
  gap: 10px;
  margin-top: 22px;
}

.btn-cancel,
.btn-create {
  height: 34px;
  padding-bottom: 1px;
  border-radius: 5px;
  font-family: Inter, sans-serif;
  font-size: 12.800px;
  font-weight: 500;
}

.btn-cancel {
  width: 73px;
  background-color: #fff;
  border: 1px solid #d1d5db;
  color: #4b5563;
}

.btn-create {
  width: 71px;
  background-color: #2563eb;
  border: none;
  color: #fff;
}

.float-tab {
  position: absolute;
  right: 0;
  top: 256px;
  display: flex;
  align-items: center;
  width: 35px;
  height: 31px;
  padding-left: 2px;
  background-color: #fff;
  border-radius: 16px 0 0 16px;
}
```
